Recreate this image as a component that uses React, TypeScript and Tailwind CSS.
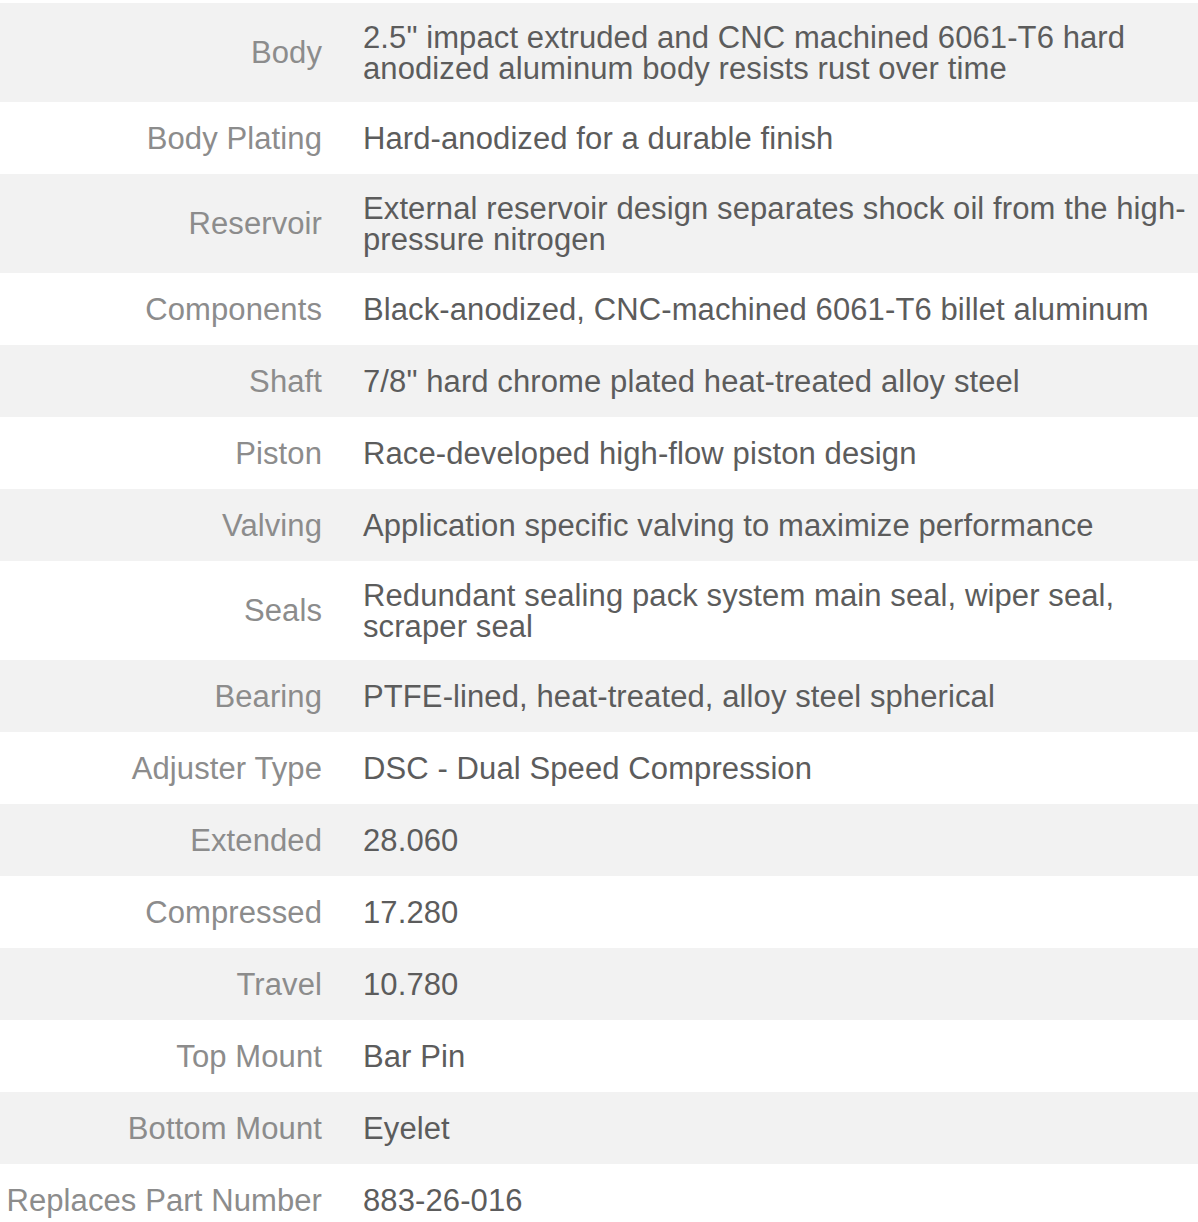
import React from "react";

const specs: { label: string; value: string }[] = [
  {
    label: "Body",
    value:
      '2.5" impact extruded and CNC machined 6061-T6 hard anodized aluminum body resists rust over time',
  },
  { label: "Body Plating", value: "Hard-anodized for a durable finish" },
  {
    label: "Reservoir",
    value:
      "External reservoir design separates shock oil from the high-pressure nitrogen",
  },
  {
    label: "Components",
    value: "Black-anodized, CNC-machined 6061-T6 billet aluminum",
  },
  { label: "Shaft", value: '7/8" hard chrome plated heat-treated alloy steel' },
  { label: "Piston", value: "Race-developed high-flow piston design" },
  {
    label: "Valving",
    value: "Application specific valving to maximize performance",
  },
  {
    label: "Seals",
    value: "Redundant sealing pack system main seal, wiper seal, scraper seal",
  },
  { label: "Bearing", value: "PTFE-lined, heat-treated, alloy steel spherical" },
  { label: "Adjuster Type", value: "DSC - Dual Speed Compression" },
  { label: "Extended", value: "28.060" },
  { label: "Compressed", value: "17.280" },
  { label: "Travel", value: "10.780" },
  { label: "Top Mount", value: "Bar Pin" },
  { label: "Bottom Mount", value: "Eyelet" },
  { label: "Replaces Part Number", value: "883-26-016" },
];

const App = () => {
  return (
    <div className="w-[1198px] h-[1222px] overflow-hidden bg-white pt-[3px] font-['Liberation_Sans',Arial,sans-serif] text-[31px] tracking-[0.1px]">
      {specs.map((spec, index) => (
        <div
          key={spec.label}
          className={`flex items-center min-h-[72px] py-[18.5px] ${
            index % 2 === 0 ? "bg-[#f2f2f2]" : "bg-white"
          }`}
        >
          <div className="w-[322px] shrink-0 text-right text-[#8c8c8c] leading-[31px] whitespace-nowrap">
            {spec.label}
          </div>
          <div className="flex-1 pl-[41px] text-[#5c5c5c] leading-[31px]">
            {spec.value}
          </div>
        </div>
      ))}
    </div>
  );
};

export default App;
